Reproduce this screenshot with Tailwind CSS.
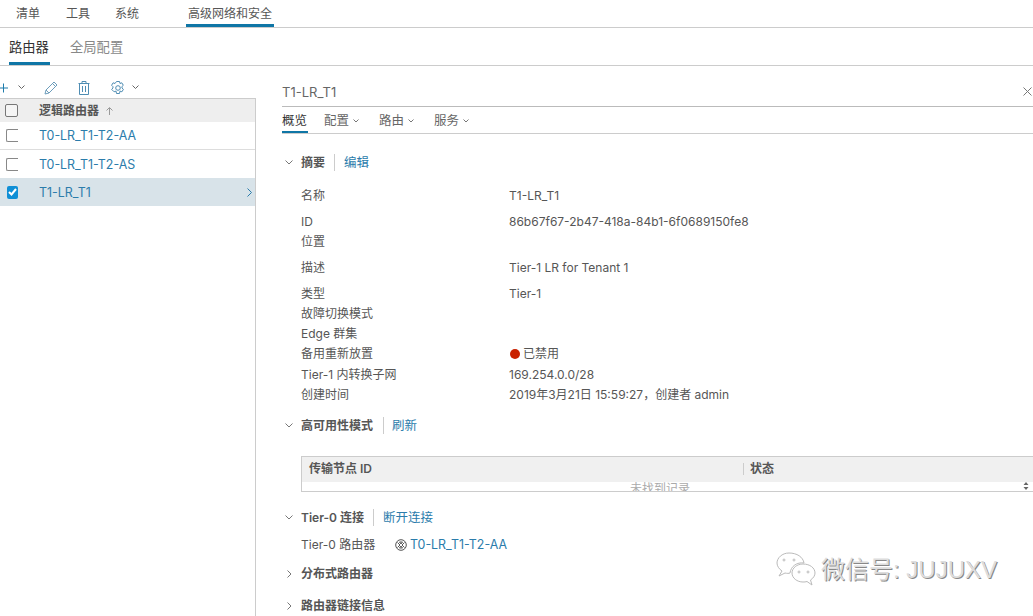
<!DOCTYPE html>
<html lang="zh-CN">
<head>
    <meta charset="UTF-8">
    <title>高级网络和安全</title>
    <script src="https://cdn.jsdelivr.net/npm/@tailwindcss/browser@4"></script>
</head>
<body class="bg-white">
<div class="relative w-[1033px] h-[616px] overflow-hidden bg-white text-[12px] leading-[16px] text-[#565656] font-['Inter','Noto_Sans_CJK_SC',sans-serif]">

    <!-- Top nav -->
    <nav class="flex h-[28px] border-b border-[#ccc] pl-[16px] text-[12px]">
        <a class="pt-[6px] w-[50px]">清单</a>
        <a class="pt-[6px] w-[49px]">工具</a>
        <a class="pt-[6px] w-[71px]">系统</a>
        <a class="h-[27px] px-[2px] pt-[6px] w-[88px] border-b-[3px] border-[#0f76a6]">高级网络和安全</a>
    </nav>

    <!-- Sub nav -->
    <nav class="flex h-[38px] border-b border-[#ccc] pl-[9px] text-[13.3px]">
        <a class="h-[37px] w-[41px] pt-[11px] border-b-[3px] border-[#0f76a6] text-[#333] whitespace-nowrap">路由器</a>
        <a class="ml-[20px] pt-[11px] text-[#888]">全局配置</a>
    </nav>

    <div class="flex">
        <!-- Left list -->
        <aside class="w-[256px] shrink-0">
            <div class="flex items-center h-[32px] pt-[11px]">
                <svg class="w-[10px] h-[10px] -ml-[1px]" viewBox="0 0 10 10" fill="none" stroke="#1d7bab" stroke-width="1"><path d="M0 5h9M4.500 .5v9"/></svg>
                <svg class="w-[7px] h-[5px] ml-[9px]" viewBox="0 0 7 5" fill="none" stroke="#666" stroke-width="1"><path d="M.5 .5l3 3 3-3"/></svg>
                <svg class="w-[14px] h-[14px] ml-[19px]" viewBox="0 0 14 14" fill="none" stroke="#6d9dbb" stroke-width="1"><path d="M1 13l1-4L10 1l3 3-8 8zM2 9l3 3M8.500 2.500l3 3"/></svg>
                <svg class="w-[12px] h-[14px] ml-[20px]" viewBox="0 0 12 14" fill="none" stroke="#4f8db3" stroke-width="1"><path d="M.5 2.500h11M4 2.500V.5h4v2M1.500 2.500v11h9v-11M4.500 5v6M7.500 5v6"/></svg>
                <svg class="w-[14px] h-[14px] ml-[21px]" viewBox="0 0 14 14" fill="none" stroke="#4f8db3" stroke-width="1"><path d="M5.500 .5h3l.5 2 1.800-.7 1.500 2.500-1.400 1.300.1 1.400 1.400 1.300-1.500 2.500-1.900-.7-.5 2.400h-3l-.5-2.400-1.900.7L.6 8.300 2 7 1.900 5.600.6 4.300l1.500-2.500 1.900.7z"/><circle cx="7" cy="7" r="2.300"/></svg>
                <svg class="w-[7px] h-[5px] ml-[7px]" viewBox="0 0 7 5" fill="none" stroke="#666" stroke-width="1"><path d="M.5 .5l3 3 3-3"/></svg>
            </div>

            <div class="border-r border-[#ccc] h-[518px]">
                <div class="flex items-center h-[24px] bg-[#eee] border-t border-[#ccc] font-semibold text-[#565656]">
                    <span class="w-[13px] h-[13px] ml-[5px] border border-[#777] rounded-[2px] bg-white/40"></span>
                    <span class="ml-[21px]">逻辑路由器</span>
                    <svg class="w-[7px] h-[8px] ml-[7px]" viewBox="0 0 7 8" fill="none" stroke="#999" stroke-width="1"><path d="M3.500 8V1M.5 3.500l3-3 3 3"/></svg>
                </div>
                <div class="flex items-center h-[28px] border-b border-[#ddd]">
                    <span class="w-[12px] h-[13px] ml-[6px] border-l border-y border-[#888] rounded-l-[2px]"></span>
                    <a class="ml-[21px] pt-[1px] text-[12.4px] text-[#2b7cab]">T0-LR_T1-T2-AA</a>
                </div>
                <div class="flex items-center h-[28px]">
                    <span class="w-[12px] h-[13px] ml-[6px] border-l border-y border-[#888] rounded-l-[2px]"></span>
                    <a class="ml-[21px] pt-[1px] text-[12.4px] text-[#2b7cab]">T0-LR_T1-T2-AS</a>
                </div>
                <div class="flex items-center h-[28px] bg-[#d8e3e9]">
                    <span class="flex items-center justify-center w-[11px] h-[13px] ml-[7px] bg-[#0f8fd6] rounded-[2px]">
                        <svg class="w-[9px] h-[8px]" viewBox="0 0 9 8" fill="none" stroke="#fff" stroke-width="2"><path d="M1 4l2.500 2.500L8 1"/></svg>
                    </span>
                    <a class="ml-[21px] pt-[1px] text-[12.4px] text-[#2b7cab]">T1-LR_T1</a>
                    <svg class="w-[6px] h-[9px] ml-auto mr-[2px]" viewBox="0 0 6 9" fill="none" stroke="#2b7cab" stroke-width="1"><path d="M.5 .5l4 4-4 4"/></svg>
                </div>
            </div>
        </aside>

        <!-- Detail pane -->
        <main class="flex-1 min-w-0 pl-[26px]">
            <div class="flex items-center justify-between h-[41px] pt-[11px] border-b border-[#bbb] text-[13px] text-[#666]">
                <span>T1-LR_T1</span>
                <svg class="w-[9px] h-[9px] mr-[1px]" viewBox="0 0 9 9" fill="none" stroke="#777" stroke-width="1"><path d="M.5 .5l8 8M8.500 .5l-8 8"/></svg>
            </div>
            <div class="flex h-[27px] border-b border-[#ccc] text-[12.5px]">
                <a class="w-[26px] h-[26px] pt-[6px] border-b-2 border-[#0f76a6] text-[#333]">概览</a>
                <a class="flex items-center gap-[4px] ml-[16px] h-[26px] pt-[1px] text-[#666]">配置<svg class="w-[6px] h-[4px]" viewBox="0 0 6 4" fill="none" stroke="#777"><path d="M.5 .5L3 3 5.500 .5"/></svg></a>
                <a class="flex items-center gap-[4px] ml-[20px] h-[26px] pt-[1px] text-[#666]">路由<svg class="w-[6px] h-[4px]" viewBox="0 0 6 4" fill="none" stroke="#777"><path d="M.5 .5L3 3 5.500 .5"/></svg></a>
                <a class="flex items-center gap-[4px] ml-[20px] h-[26px] pt-[1px] text-[#666]">服务<svg class="w-[6px] h-[4px]" viewBox="0 0 6 4" fill="none" stroke="#777"><path d="M.5 .5L3 3 5.500 .5"/></svg></a>
            </div>

            <!-- 摘要 -->
            <div class="flex items-center h-[19px] mt-[19px] font-semibold">
                <svg class="w-[8px] h-[5px] ml-[3px]" viewBox="0 0 8 5" fill="none" stroke="#777"><path d="M.5 .5L4 4 7.500 .5"/></svg>
                <span class="ml-[8px]">摘要</span>
                <span class="w-px h-[17px] bg-[#ccc] ml-[9px]"></span>
                <a class="ml-[9px] font-normal text-[12.5px] text-[#2b7cab]">编辑</a>
            </div>

            <div class="mt-[16px] ml-[19px] grid grid-cols-[208px_1fr]">
                <span class="h-[26px]">名称</span><span>T1-LR_T1</span>
                <span class="h-[20px]">ID</span><span>86b67f67-2b47-418a-84b1-6f0689150fe8</span>
                <span class="h-[26px]">位置</span><span></span>
                <span class="h-[26px]">描述</span><span>Tier-1 LR for Tenant 1</span>
                <span class="h-[20px]">类型</span><span>Tier-1</span>
                <span class="h-[20px]">故障切换模式</span><span></span>
                <span class="h-[20px]">Edge 群集</span><span></span>
                <span class="h-[20px]">备用重新放置</span>
                <span class="flex items-center gap-[3px] h-[16px]"><i class="w-[10px] h-[10px] rounded-full bg-[#c92100] ml-[1px]"></i>已禁用</span>
                <span class="h-[21px] pt-[1px]">Tier-1 内转换子网</span><span class="pt-[1px]">169.254.0.0/28</span>
                <span class="h-[20px]">创建时间</span><span>2019年3月21日 15:59:27，创建者 admin</span>
            </div>

            <!-- 高可用性模式 -->
            <div class="flex items-center h-[19px] mt-[9px] font-semibold">
                <svg class="w-[8px] h-[5px] ml-[3px]" viewBox="0 0 8 5" fill="none" stroke="#777"><path d="M.5 .5L4 4 7.500 .5"/></svg>
                <span class="ml-[8px]">高可用性模式</span>
                <span class="w-px h-[17px] bg-[#ccc] ml-[10px]"></span>
                <a class="ml-[8px] font-normal text-[12.5px] text-[#2b7cab]">刷新</a>
            </div>

            <div class="relative ml-[19px] mt-[21px] h-[36px] border-y border-l border-[#ccc] overflow-hidden">
                <div class="flex items-center h-[25px] pb-[1px] bg-[#f0f0f0] font-semibold">
                    <span class="w-[442px] h-[12px] leading-[12px] pl-[7px] border-r border-[#ccc]">传输节点 ID</span>
                    <span class="pl-[6px]">状态</span>
                </div>
                <p class="pl-[328px] text-[#aaa] leading-[14px]">未找到记录</p>
                <svg class="absolute right-[2px] bottom-[0px] w-[10px] h-[9px]" viewBox="0 0 10 9" fill="#666"><path d="M5 0l2.500 3h-5zM5 8l2.500-3h-5z"/></svg>
            </div>

            <!-- Tier-0 连接 -->
            <div class="flex items-center h-[19px] mt-[16px] font-semibold">
                <svg class="w-[8px] h-[5px] ml-[3px]" viewBox="0 0 8 5" fill="none" stroke="#777"><path d="M.5 .5L4 4 7.500 .5"/></svg>
                <span class="ml-[8px]">Tier-0 连接</span>
                <span class="w-px h-[17px] bg-[#ccc] ml-[9px]"></span>
                <a class="ml-[9px] font-normal text-[12.5px] text-[#2b7cab]">断开连接</a>
            </div>
            <div class="flex items-center h-[16px] mt-[10px] ml-[19px]">
                <span class="w-[94px]">Tier-0 路由器</span>
                <svg class="w-[12px] h-[12px]" viewBox="0 0 12 12" fill="none" stroke="#555"><circle cx="6" cy="6" r="5.300"/><path d="M2.500 3.500L5 6l-2.500 2.500M9.500 3.500L7 6l2.500 2.500M6 5l-1.500-2h3zM6 7l-1.500 2h3z"/></svg>
                <a class="ml-[3px] text-[12.4px] text-[#2b7cab]">T0-LR_T1-T2-AA</a>
            </div>

            <div class="flex items-center h-[19px] mt-[11px] font-semibold">
                <svg class="w-[5px] h-[8px] ml-[5px]" viewBox="0 0 5 8" fill="none" stroke="#777"><path d="M.5 .5L4 4 .5 7.500"/></svg>
                <span class="ml-[9px]">分布式路由器</span>
            </div>
            <div class="flex items-center h-[19px] mt-[13px] font-semibold">
                <svg class="w-[5px] h-[8px] ml-[5px]" viewBox="0 0 5 8" fill="none" stroke="#777"><path d="M.5 .5L4 4 .5 7.500"/></svg>
                <span class="ml-[9px]">路由器链接信息</span>
            </div>
        </main>
    </div>

    <!-- Watermark -->
    <div class="absolute left-[775px] top-[552px] flex items-center text-[24px] leading-[32px] text-[#ddd] [text-shadow:1px_1px_0_#888] font-['Liberation_Sans','Noto_Sans_CJK_SC',sans-serif]">
        <svg class="w-[42px] h-[36px] mr-[4px]" viewBox="0 0 42 36" fill="#fff" stroke="#bbb" stroke-width="1">
            <path d="M14 1c-7 0-12 5-12 10 0 3 2 6 5 8l-3 5 6-3c2 .5 4 .5 5 0 1-7 7-11 14-10C28 5 22 1 14 1z"/>
            <path d="M28 12c-6 0-11 4-11 9s5 9 11 9c1 0 3 0 4-.5l5 3.500-1.500-5c3-2 4.500-4.500 4.500-7 0-5-5-9-12-9z"/>
            <circle cx="9" cy="8" r="1"/><circle cx="19" cy="8" r="1"/><circle cx="24" cy="20" r="1"/><circle cx="33" cy="20" r="1"/>
        </svg>
        <span>微信号: JUJUXV</span>
    </div>
</div>
</body>
</html>
